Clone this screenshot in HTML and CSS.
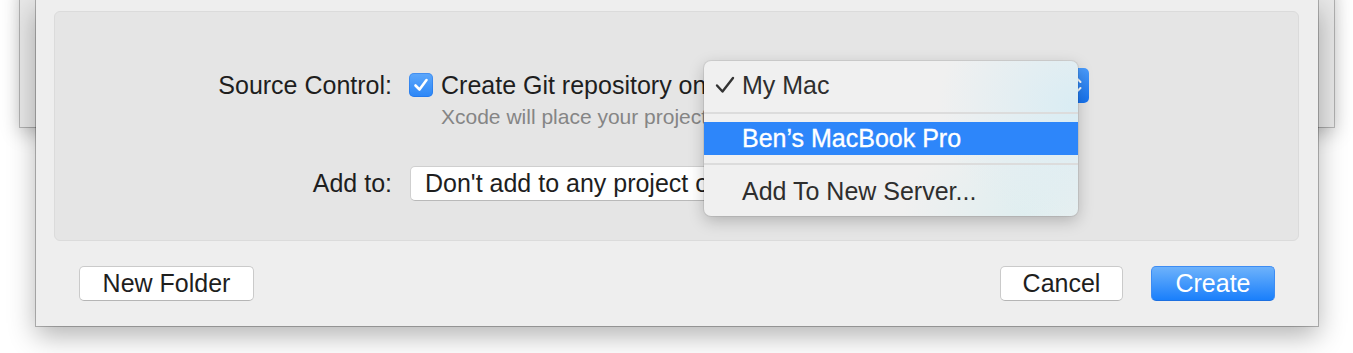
FILE: index.html
```html
<!DOCTYPE html>
<html lang="en">
<head>
    <meta charset="UTF-8">
    <meta name="viewport" content="width=device-width, initial-scale=1.0">
    <title>New Project</title>
    <link rel="stylesheet" href="styles.css">
</head>
<body>
    <div class="desktop">
        <div class="back-window"></div>

        <div class="sheet">
            <div class="options">
                <div class="form">
                    <div class="label">Source Control:</div>
                    <div class="field">
                        <div class="check-line">
                            <span class="checkbox">
                                <svg width="24" height="24" viewBox="0 0 24 24"><path d="M6.5 12.5 L10.5 16.5 L17.5 7" fill="none" stroke="#fff" stroke-width="2.6" stroke-linecap="round" stroke-linejoin="round"/></svg>
                            </span>
                            <span class="check-text">Create Git repository on</span>
                            <span class="git-popup">
                                <span class="popup-value"></span>
                                <span class="popup-cap">
                                    <svg width="12" height="22" viewBox="0 0 12 22"><path d="M2.5 8 L6 4.5 L9.5 8 M2.5 14 L6 17.5 L9.5 14" fill="none" stroke="#fff" stroke-width="2" stroke-linecap="round" stroke-linejoin="round"/></svg>
                                </span>
                            </span>
                        </div>
                        <div class="hint">Xcode will place your project under version control</div>
                    </div>

                    <div class="label label-add">Add to:</div>
                    <div class="field">
                        <div class="select">Don't add to any project or workspace</div>
                    </div>
                </div>

                <div class="menu">
                    <div class="menu-item item-first">
                        <svg class="tick" width="20" height="18" viewBox="0 0 20 18"><path d="M2 9.5 L7.5 15.5 L18 2" fill="none" stroke="#333" stroke-width="2.4" stroke-linecap="round" stroke-linejoin="round"/></svg>
                        My Mac
                    </div>
                    <div class="menu-sep"></div>
                    <div class="menu-item selected">Ben’s MacBook Pro</div>
                    <div class="menu-sep"></div>
                    <div class="menu-item item-last">Add To New Server...</div>
                </div>
            </div>

            <div class="footer">
                <button class="btn">New Folder</button>
                <div class="footer-right">
                    <button class="btn">Cancel</button>
                    <button class="btn primary">Create</button>
                </div>
            </div>
        </div>
    </div>
</body>
</html>
```

FILE: styles.css
```css
body {
    margin: 0;
    background: #ffffff;
    font-family: "Liberation Sans", Arial, sans-serif;
    color: #1e1e1e;
    overflow: hidden;
}
.desktop {
    position: relative;
    width: 1353px;
    height: 353px;
}
.back-window {
    position: absolute;
    left: 20px;
    top: -20px;
    width: 1314px;
    height: 147px;
    background: #e8e8e8;
    box-shadow: 0 0 0 1px rgba(0, 0, 0, 0.22), 0 6px 18px rgba(0, 0, 0, 0.25);
}
.sheet {
    position: relative;
    margin-left: 36px;
    width: 1282px;
    height: 326px;
    box-sizing: border-box;
    padding: 11px 19px 0 18px;
    background: #eeeeee;
    box-shadow: 0 0 0 1px rgba(0, 0, 0, 0.25), 0 10px 26px rgba(0, 0, 0, 0.3);
}
.options {
    position: relative;
    height: 230px;
    box-sizing: border-box;
    padding-top: 58px;
    background: #e5e5e5;
    border: 1px solid #dbdbdb;
    border-radius: 6px;
}
.form {
    display: grid;
    grid-template-columns: 337px 1fr;
    column-gap: 17px;
    row-gap: 37px;
    font-size: 25px;
}
.label {
    text-align: right;
    line-height: 30px;
}
.label-add {
    line-height: 35px;
}
.check-line {
    display: flex;
    align-items: center;
    height: 30px;
}
.checkbox {
    width: 24px;
    height: 24px;
    border-radius: 5px;
    background: linear-gradient(#5ea8fb, #2b86f7);
    box-shadow: inset 0 0 0 1px rgba(20, 100, 220, 0.35);
}
.checkbox svg {
    display: block;
}
.check-text {
    margin-left: 8px;
    white-space: nowrap;
}
.git-popup {
    display: flex;
    align-items: center;
    margin-left: 8px;
    width: 375px;
    height: 35px;
    background: #fff;
    border-radius: 5px;
}
.popup-value {
    flex: 1;
}
.popup-cap {
    display: flex;
    align-items: center;
    justify-content: center;
    width: 24px;
    height: 35px;
    border-radius: 0 5px 5px 0;
    background: linear-gradient(#4a9bfb, #1672ee);
}
.hint {
    margin: 5px 0 0 32px;
    font-size: 21px;
    line-height: 24px;
    color: #858585;
    white-space: nowrap;
}
.select {
    margin-left: 1px;
    width: 480px;
    height: 35px;
    box-sizing: border-box;
    padding-left: 14px;
    line-height: 33px;
    background: #fff;
    border: 1px solid #cfcfcf;
    border-bottom-color: #b9b9b9;
    border-radius: 5px;
    white-space: nowrap;
}
.menu {
    position: absolute;
    left: 649px;
    top: 49px;
    width: 374px;
    height: 155px;
    box-sizing: border-box;
    padding: 5px 0 6px;
    border-radius: 7px;
    background:
        radial-gradient(ellipse 140px 120px at 100% 30%, rgba(214, 236, 244, 0.9), rgba(214, 236, 244, 0)),
        radial-gradient(ellipse 120px 90px at 85% 100%, rgba(220, 238, 240, 0.8), rgba(220, 238, 240, 0)),
        #f0f0f0;
    box-shadow: 0 0 0 1px rgba(0, 0, 0, 0.07), 0 5px 16px rgba(0, 0, 0, 0.22);
    font-size: 25px;
    color: #2e2e2e;
}
.menu-item {
    position: relative;
    display: flex;
    align-items: center;
    padding-left: 38px;
    white-space: nowrap;
}
.item-first {
    height: 38px;
}
.item-last {
    height: 37px;
}
.menu-item.selected {
    height: 33px;
    background: #2d86fa;
    color: #fff;
    -webkit-text-stroke: 0.35px #fff;
}
.tick {
    position: absolute;
    left: 11px;
    top: 10px;
}
.menu-sep {
    height: 18px;
    display: flex;
    align-items: center;
}
.menu-sep::before {
    content: "";
    flex: 1;
    height: 2px;
    background: #dcdcdc;
}
.footer {
    display: flex;
    justify-content: space-between;
    margin-top: 25px;
    padding: 0 24px 0 25px;
}
.footer-right {
    display: flex;
    gap: 28px;
}
.btn {
    height: 35px;
    box-sizing: border-box;
    padding: 0;
    font-family: "Liberation Sans", Arial, sans-serif;
    font-size: 25px;
    color: #1e1e1e;
    background: #fff;
    border: 1px solid #cacaca;
    border-bottom-color: #b5b5b5;
    border-radius: 5px;
    width: 175px;
}
.footer-right .btn {
    width: 123px;
}
.footer-right .btn.primary {
    width: 124px;
    color: #fff;
    background: linear-gradient(#6db2fb, #1a7ffb);
    border-color: #3d8cf3;
    border-bottom-color: #1c6fe0;
}
```
